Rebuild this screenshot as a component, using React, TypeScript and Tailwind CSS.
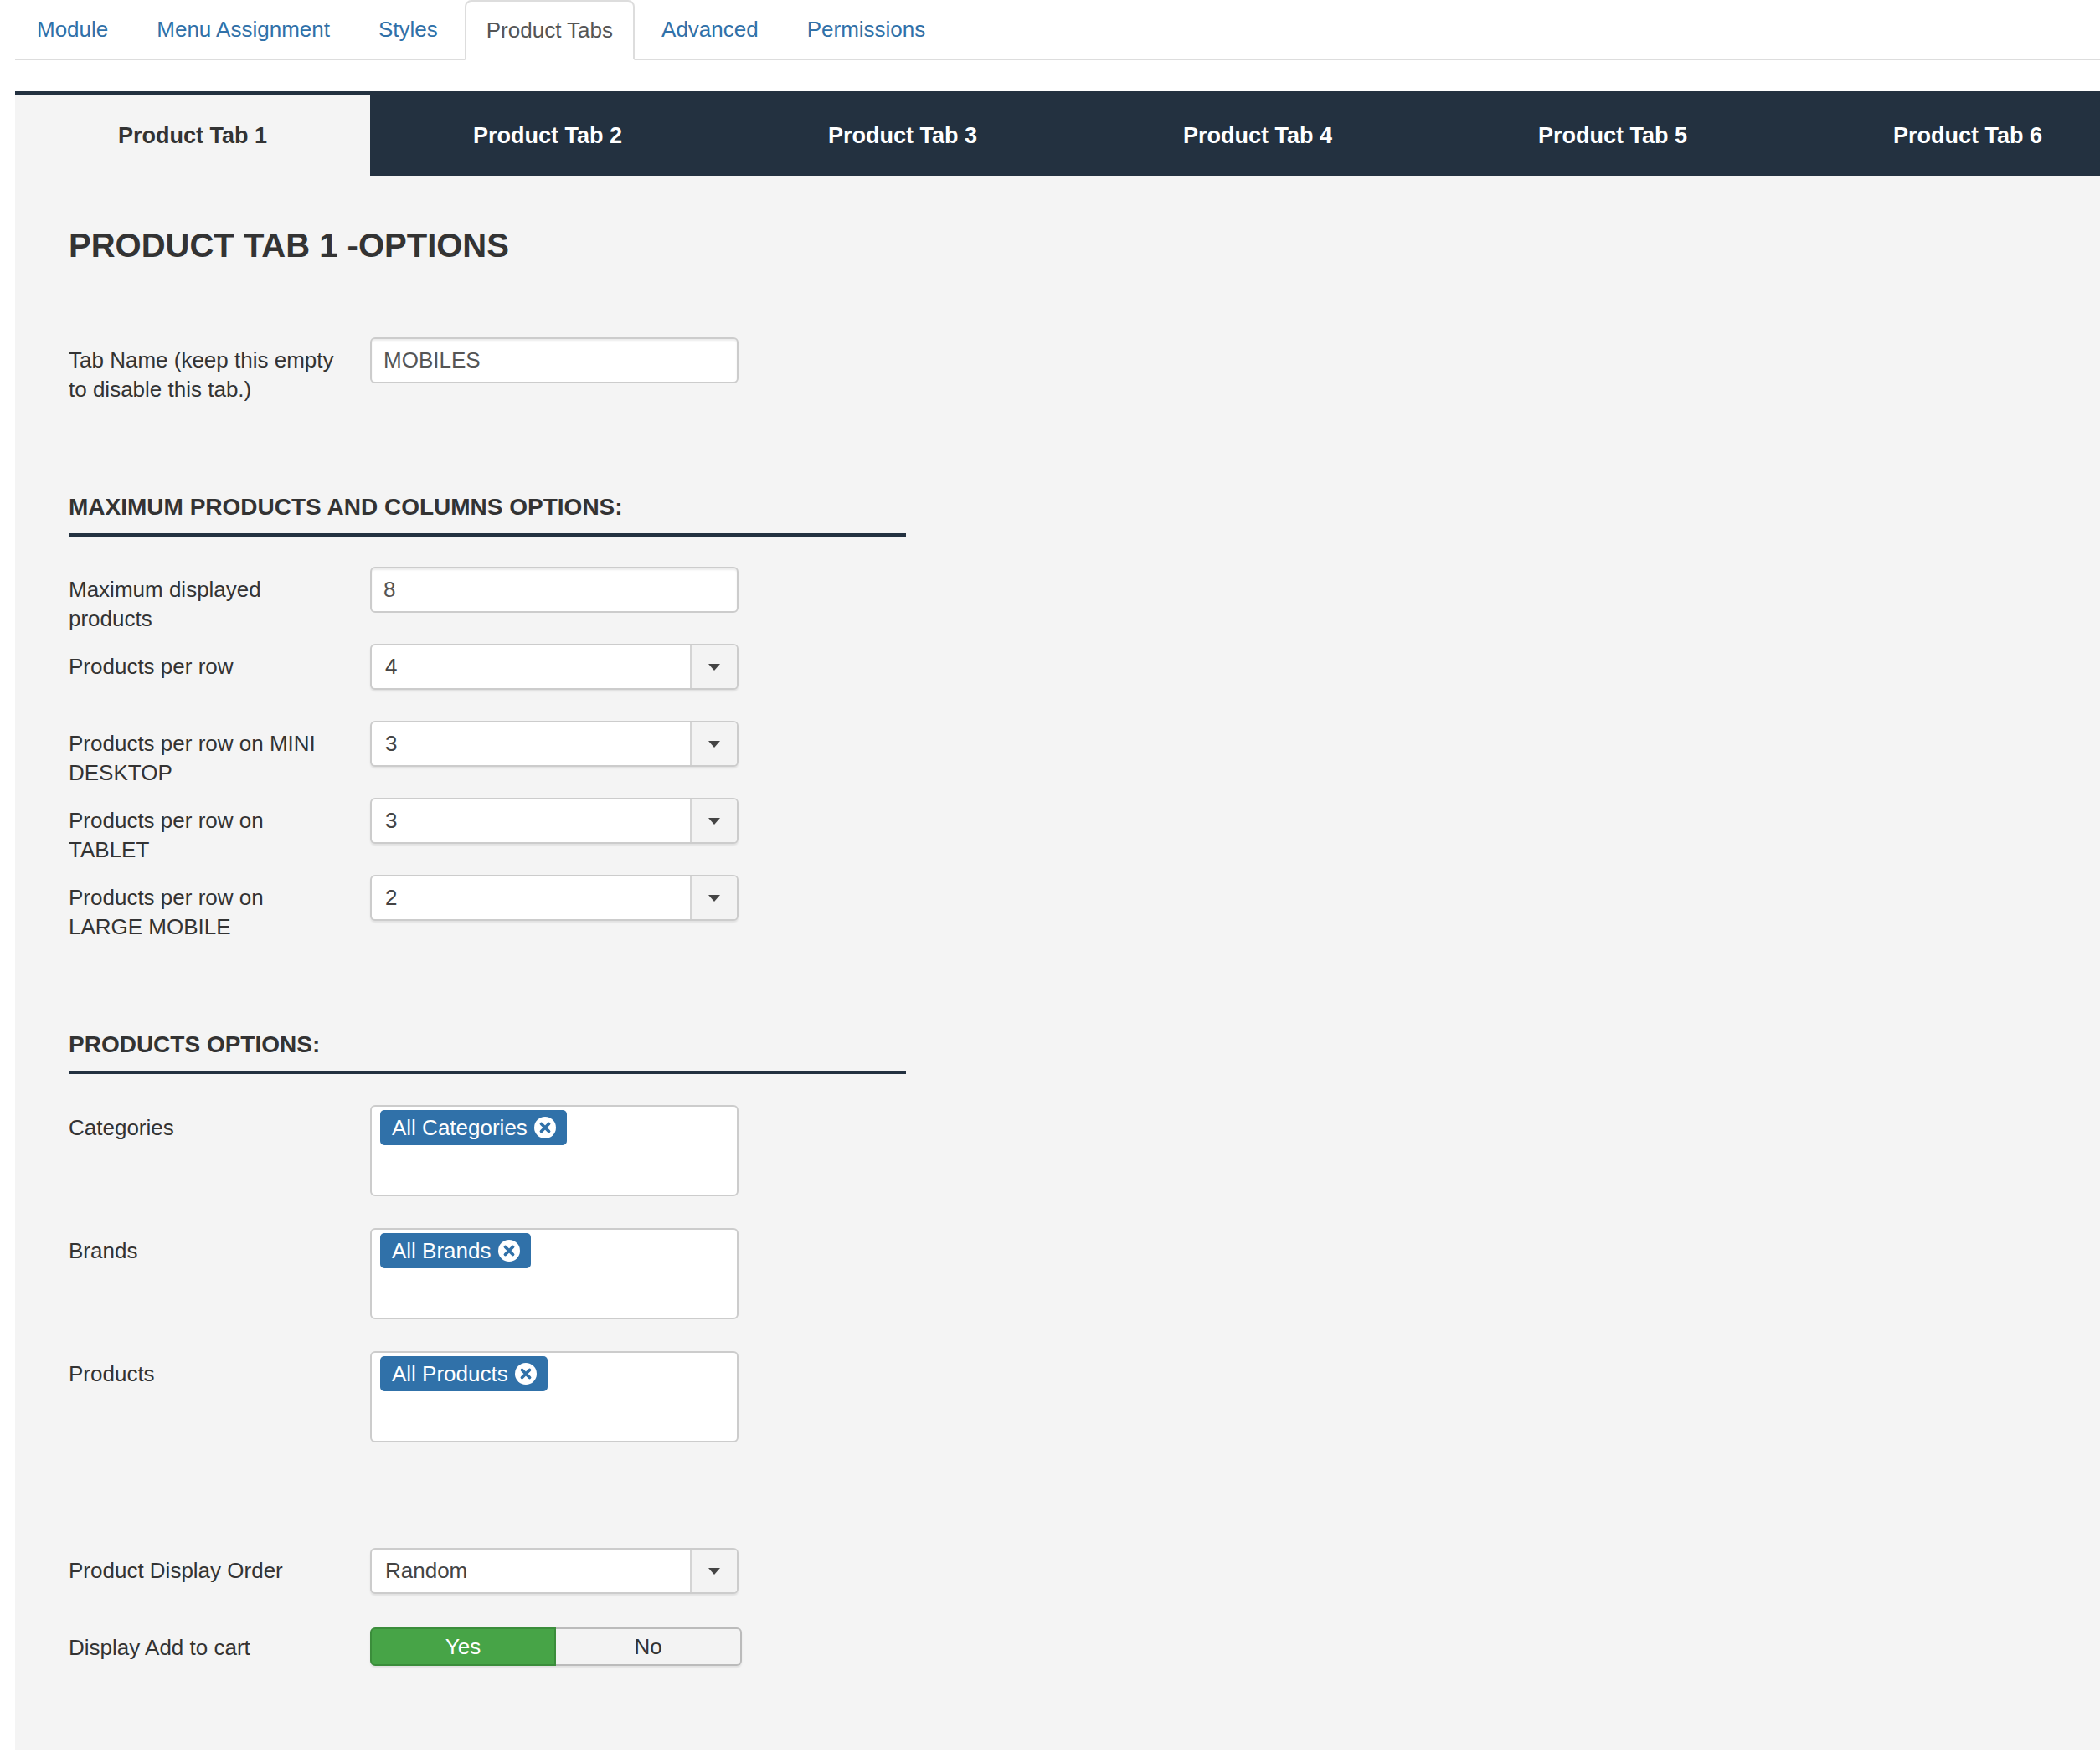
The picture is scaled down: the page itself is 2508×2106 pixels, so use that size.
import React from "react";

const navItems = ["Module", "Menu Assignment", "Styles", "Product Tabs", "Advanced", "Permissions"];
const productTabs = ["Product Tab 1", "Product Tab 2", "Product Tab 3", "Product Tab 4", "Product Tab 5", "Product Tab 6"];

function CaretDown() {
  return (
    <svg width="16" height="10" viewBox="0 0 16 10" className="block">
      <path d="M1 1 L15 1 L8 9 Z" fill="#444444" />
    </svg>
  );
}

function CircleX() {
  return (
    <svg width="26" height="26" viewBox="0 0 26 26" className="block shrink-0">
      <circle cx="13" cy="13" r="13" fill="#ffffff" />
      <path d="M8.5 8.5 L17.5 17.5 M17.5 8.5 L8.5 17.5" stroke="#3071a9" strokeWidth="3.8" strokeLinecap="round" />
    </svg>
  );
}

function Row({
  label,
  tall,
  children,
}: {
  label: string;
  tall?: boolean;
  children: React.ReactNode;
}) {
  return (
    <div className={`flex items-start ${tall ? "h-[147px]" : "h-[92px]"}`}>
      <label className="w-[323px] mr-[37px] shrink-0 pt-[10px] text-[26px] leading-[35px] text-[#333333]">
        {label}
      </label>
      {children}
    </div>
  );
}

function TextInput({ value }: { value: string }) {
  return (
    <div className="flex h-[55px] w-[440px] items-center rounded-[6px] border-2 border-[#cccccc] bg-white px-[14px] text-[26px] text-[#555555] shadow-[inset_0_2px_2px_rgba(0,0,0,0.075)]">
      {value}
    </div>
  );
}

function Select({ value }: { value: string }) {
  return (
    <div className="flex h-[55px] w-[440px] overflow-hidden rounded-[6px] border-2 border-[#cccccc] bg-white shadow-[0_2px_2px_rgba(0,0,0,0.08)]">
      <div className="flex flex-1 items-center pl-[16px] text-[26px] text-[#444444]">{value}</div>
      <div className="flex w-[56px] items-center justify-center border-l-2 border-[#d4d4d4] bg-[#f3f3f3]">
        <CaretDown />
      </div>
    </div>
  );
}

function MultiSelect({ value }: { value: string }) {
  return (
    <div className="h-[109px] w-[440px] rounded-[6px] border-2 border-[#cccccc] bg-white px-[10px] pt-[4px]">
      <span className="inline-flex h-[42px] items-center gap-[8px] rounded-[5px] bg-[#3071a9] pl-[14px] pr-[13px] text-[26px] text-white">
        {value}
        <CircleX />
      </span>
    </div>
  );
}

function SectionHeading({ title }: { title: string }) {
  return (
    <h3 className="mt-[93px] w-[1000px] border-b-4 border-[#233140] pb-[13px] text-[28px] font-bold leading-[36px] text-[#333333]">
      {title}
    </h3>
  );
}

export default function App() {
  return (
    <div className="min-h-[2106px] overflow-hidden bg-white pl-[18px] font-['Liberation_Sans',Arial,sans-serif]">
      {/* joomla module tabs */}
      <ul className="flex h-[72px] border-b-2 border-[#dddddd]">
        {navItems.map((item) =>
          item === "Product Tabs" ? (
            <li
              key={item}
              className="-mb-[2px] mr-[6px] flex h-[72px] items-center rounded-t-[8px] border-2 border-[#dddddd] border-b-white bg-white px-[24px] text-[26px] text-[#555555]"
            >
              {item}
            </li>
          ) : (
            <li
              key={item}
              className="mr-[6px] flex items-center border-2 border-transparent px-[24px] text-[26px] text-[#3071a9]"
            >
              {item}
            </li>
          )
        )}
      </ul>

      {/* product tabs bar */}
      <div className="mt-[37px] flex overflow-hidden bg-[#233140] pt-[5px]">
        {productTabs.map((t, i) => (
          <div
            key={t}
            className={`flex h-[96px] w-[424px] shrink-0 items-center justify-center text-[27px] font-bold ${
              i === 0 ? "bg-[#f4f4f4] text-[#333333]" : "text-white"
            }`}
          >
            {t}
          </div>
        ))}
      </div>

      <div className="bg-[#f4f4f4] pb-[57px] pl-[64px] pt-[59px]">
        <h2 className="text-[40px] font-bold leading-[48px] text-[#333333]">PRODUCT TAB 1 -OPTIONS</h2>

        <div className="mt-[86px]">
          <Row label="Tab Name (keep this empty to disable this tab.)">
            <TextInput value="MOBILES" />
          </Row>
        </div>

        <SectionHeading title="MAXIMUM PRODUCTS AND COLUMNS OPTIONS:" />
        <div className="mt-[36px]">
          <Row label="Maximum displayed products">
            <TextInput value="8" />
          </Row>
          <Row label="Products per row">
            <Select value="4" />
          </Row>
          <Row label="Products per row on MINI DESKTOP">
            <Select value="3" />
          </Row>
          <Row label="Products per row on TABLET">
            <Select value="3" />
          </Row>
          <Row label="Products per row on LARGE MOBILE">
            <Select value="2" />
          </Row>
        </div>

        <SectionHeading title="PRODUCTS OPTIONS:" />
        <div className="mt-[37px]">
          <Row label="Categories" tall>
            <MultiSelect value="All Categories" />
          </Row>
          <Row label="Brands" tall>
            <MultiSelect value="All Brands" />
          </Row>
          <Row label="Products" tall>
            <MultiSelect value="All Products" />
          </Row>
        </div>

        <div className="mt-[88px]">
          <Row label="Product Display Order">
            <Select value="Random" />
          </Row>
          <Row label="Display Add to cart">
            <div className="flex h-[52px] items-center">
              <div className="flex h-[46px] w-[444px] rounded-[6px] text-[26px] shadow-[0_2px_2px_rgba(0,0,0,0.08)]">
                <div className="flex w-1/2 items-center justify-center rounded-l-[6px] border-2 border-[#3b8d3b] bg-[#47a447] text-white">
                  Yes
                </div>
                <div className="flex w-1/2 items-center justify-center rounded-r-[6px] border-2 border-l-0 border-[#bbbbbb] bg-[#f3f3f3] text-[#333333]">
                  No
                </div>
              </div>
            </div>
          </Row>
        </div>
      </div>
    </div>
  );
}
